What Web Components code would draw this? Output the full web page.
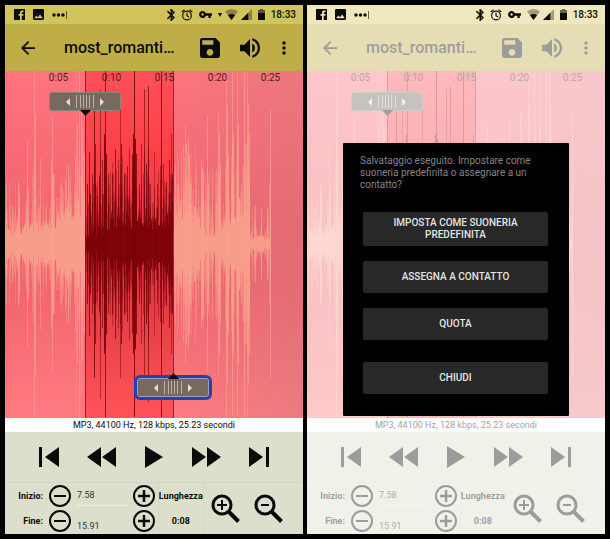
<!DOCTYPE html>
<html lang="it">
<head>
<meta charset="utf-8">
<meta name="viewport" content="width=device-width, initial-scale=1">
<title>Ringtone editor</title>
<style>
  html { height: 100%; }
  body {
    margin: 0; min-height: 100%; box-sizing: border-box; padding: 5px;
    display: grid; grid-template-columns: 1fr 1fr; gap: 4px;
    background: #000; color: #0b0b0b;
    font: 10px/12px Roboto, "Noto Sans", sans-serif;
  }
</style>
</head>
<body>
<phone-screen>
  <status-bar slot="status" roaming></status-bar>
  <app-toolbar heading="most_romanti…"></app-toolbar>
  <wave-view></wave-view>
  <info-line>MP3, 44100 Hz, 128 kbps, 25.23 secondi</info-line>
  <transport-bar></transport-bar>
  <range-panel start="7.58" end="15.91" length="0:08"></range-panel>
</phone-screen>
<phone-screen dimmed>
  <status-bar slot="status"></status-bar>
  <app-toolbar heading="most_romanti…"></app-toolbar>
  <wave-view></wave-view>
  <info-line>MP3, 44100 Hz, 128 kbps, 25.23 secondi</info-line>
  <transport-bar></transport-bar>
  <range-panel start="7.58" end="15.91" length="0:08"></range-panel>
  <choice-dialog slot="dialog">
    <span slot="message">Salvataggio eseguito. Impostare come suoneria predefinita o assegnare a un contatto?</span>
    <dialog-option>IMPOSTA COME SUONERIA PREDEFINITA</dialog-option>
    <dialog-option>ASSEGNA A CONTATTO</dialog-option>
    <dialog-option>QUOTA</dialog-option>
    <dialog-option last>CHIUDI</dialog-option>
  </choice-dialog>
</phone-screen>

<script>
const BUTTON_RESET = `
  button { all: unset; box-sizing: border-box; display: flex; align-items: center; justify-content: center; cursor: pointer; }
`;

// name: [viewBox, width, height, markup]
const ICONS = {
  facebook: ['0 0 22 22', 11, 11, '<path fill-rule="evenodd" d="M1 0H21Q22 0 22 1V21Q22 22 21 22H15.500V13.500H18.500L19 10H15.500V8Q15.500 6.500 17 6.500H19V3H16Q12 3 12 7.500V10H9V13.500H12V22H1Q0 22 0 21V1Q0 0 1 0Z"/>'],
  picture: ['3 3 18 18', 11, 11, '<path d="M21 19V5c0-1.100-.9-2-2-2H5c-1.100 0-2 .9-2 2v14c0 1.100.9 2 2 2h14c1.100 0 2-.9 2-2zM8.500 13.500l2.500 3.010L14.500 12l4.500 6H5l3.500-4.500z"/>'],
  more: ['0 0 15 8', 15, 8, '<circle cx="2" cy="4" r="1.700"/><circle cx="6.500" cy="4" r="1.700"/><circle cx="11" cy="4" r="1.700"/><path opacity=".6" d="M14 0h1v8h-1z"/>'],
  bluetooth: ['5 2 13 20', 8, 12, '<path stroke="currentColor" stroke-width=".7" d="M17.710 7.710L12 2h-1v7.590L6.410 5 5 6.410 10.590 12 5 17.590 6.410 19 11 14.410V22h1l5.710-5.710-4.300-4.290 4.300-4.290zM13 5.830l1.880 1.880L13 9.590V5.830zm1.880 10.460L13 18.170v-3.760l1.880 1.880z"/>'],
  alarm: ['0 0 24 24', 12, 12, '<g fill="none" stroke="currentColor" stroke-width="2.200"><circle cx="12" cy="13" r="8.800"/><path d="M12 7.500V13.500L16 16M1.500 6L7 1.500M22.500 6L17 1.500"/></g>'],
  key: ['1 6 22 12', 13, 7, '<path d="M12.650 10C11.830 7.670 9.610 6 7 6c-3.310 0-6 2.690-6 6s2.690 6 6 6c2.610 0 4.830-1.670 5.650-4H17v4h4v-4h2v-4H12.650zM7 14c-1.100 0-2-.9-2-2s.9-2 2-2 2 .9 2 2-.9 2-2 2z"/>'],
  down: ['0 0 4 4', 4, 4, '<path d="M0 0h4L2 4z"/>'],
  wifi: ['0 0 26 22', 13, 11, '<path opacity=".35" d="M13 22L0 5Q13-5 26 5Z"/><path d="M13 22L6 12.500Q13 7 20 12.500Z"/>'],
  signal: ['0 0 22 22', 11, 11, '<path opacity=".35" d="M22 0V22H0Z"/><path d="M14.500 7.500V22H0Z"/>'],
  battery: ['0 0 14 22', 7, 11, '<path opacity=".6" d="M4 0h6v2h4v7H0V2h4z"/><path d="M0 8h14v14H0z"/>'],
  back: ['4 4 16 16', 14, 14, '<path d="M20 11H7.830l5.590-5.590L12 4l-8 8 8 8 1.410-1.410L7.830 13H20v-2z"/>'],
  save: ['3 3 18 18', 20, 20, '<path d="M17 3H5c-1.110 0-2 .9-2 2v14c0 1.100.89 2 2 2h14c1.100 0 2-.9 2-2V7l-4-4zm-5 16c-1.660 0-3-1.340-3-3s1.340-3 3-3 3 1.340 3 3-1.340 3-3 3zm3-10H5V5h10v4z"/>'],
  volume: ['3 3 18 18', 20, 20, '<path d="M3 9v6h4l5 5V4L7 9H3zm13.500 3c0-1.770-1.020-3.290-2.500-4.030v8.050c1.480-.73 2.500-2.250 2.500-4.020zM14 3.230v2.060c2.890.86 5 3.540 5 6.710s-2.110 5.850-5 6.710v2.060c4.010-.91 7-4.490 7-8.770s-2.990-7.860-7-8.770z"/>'],
  menu: ['0 0 8 14', 8, 14, '<circle cx="4" cy="2" r="1.700"/><circle cx="4" cy="7" r="1.700"/><circle cx="4" cy="12" r="1.700"/>'],
  first: ['0 0 20 20', 20, 20, '<path d="M0 0h3v20H0zM20 0V20L6 10Z"/>'],
  rewind: ['0 0 29 20', 29, 20, '<path d="M14 0V20L0 10ZM29 0V20L15 10Z"/>'],
  play: ['0 0 18 22', 18, 22, '<path d="M0 0L18 11L0 22Z"/>'],
  forward: ['0 0 29 20', 29, 20, '<path d="M0 0L14 10L0 20ZM15 0L29 10L15 20Z"/>'],
  last: ['0 0 20 20', 20, 20, '<path d="M17 0h3v20h-3zM0 0V20L14 10Z"/>'],
  minus: ['0 0 22 22', 22, 22, '<g fill="none" stroke="currentColor" stroke-width="2"><circle cx="11" cy="11" r="10"/><path d="M5 11h12"/></g>'],
  plus: ['0 0 22 22', 22, 22, '<g fill="none" stroke="currentColor" stroke-width="2"><circle cx="11" cy="11" r="10"/><path stroke-width="2.500" d="M5 11h12M11 5v12"/></g>'],
  zoomin: ['0 0 29 29', 29, 29, '<g fill="none" stroke="currentColor" stroke-width="3"><circle cx="11" cy="11" r="9"/><path stroke-width="2" d="M6 11h10M11 6v10"/><path stroke-width="4" d="M17 17L27.500 27.500"/></g>'],
  zoomout: ['0 0 29 29', 29, 29, '<g fill="none" stroke="currentColor" stroke-width="3"><circle cx="11" cy="11" r="9"/><path stroke-width="2" d="M7 11h8"/><path stroke-width="4" d="M17 17L27.500 27.500"/></g>']
};

class Base extends HTMLElement {
  connectedCallback() {
    if (this.shadowRoot) return;
    this.attachShadow({ mode: 'open' }).innerHTML = this.view();
  }
}

customElements.define('ui-icon', class extends Base {
  view() {
    const [box, w, h, body] = ICONS[this.getAttribute('name')];
    return `<style>:host{display:block;flex:none} svg{display:block;fill:currentColor}</style>
      <svg viewBox="${box}" width="${w}" height="${h}" aria-hidden="true">${body}</svg>`;
  }
});

customElements.define('phone-screen', class extends Base {
  view() {
    return `<style>
      :host { display: flex; flex-direction: column; min-width: 0; background: #fff; }
      .area { flex: 1; display: grid; }
      .content { grid-area: 1 / 1; display: flex; flex-direction: column; min-width: 0; }
      :host([dimmed]) .content { opacity: .4; }
      .over { grid-area: 1 / 1; display: flex; align-items: center; padding: 0 36px; z-index: 1; pointer-events: none; }
      ::slotted(wave-view) { flex: 1; }
      ::slotted(choice-dialog) { flex: 1; pointer-events: auto; }
      .status { background: #d2c45c; }
      :host([dimmed]) .status { background: #efe8bf; }
    </style>
    <div class="status"><slot name="status"></slot></div>
    <div class="area"><div class="content"><slot></slot></div><div class="over"><slot name="dialog"></slot></div></div>`;
  }
});

customElements.define('status-bar', class extends Base {
  view() {
    const i = n => `<ui-icon name="${n}"></ui-icon>`;
    return `<style>
      :host { display: flex; align-items: center; justify-content: space-between; height: 19px; padding: 0 7px 0 9px; }
      div { display: flex; align-items: center; }
      .left { gap: 8px; } .right { gap: 6px; } .net { gap: 3px; }
      time { font-weight: 500; }
    </style>
    <div class="left">${i('facebook')}${i('picture')}${i('more')}</div>
    <div class="right">${i('bluetooth')}${i('alarm')}${i('key')}
      <div class="net">${this.hasAttribute('roaming') ? i('down') : ''}${i('wifi')}${i('signal')}</div>
      ${i('battery')}<time>18:33</time></div>`;
  }
});

customElements.define('app-toolbar', class extends Base {
  view() {
    return `<style>${BUTTON_RESET}
      :host { display: flex; align-items: center; height: 47px; padding: 0 15px 0 16px; background: #bfae48; }
      h1 { flex: 1; margin: 0 0 0 29px; font-size: 16px; line-height: 20px; font-weight: 500; white-space: nowrap; }
      nav { display: flex; align-items: center; gap: 20px; }
    </style>
    <button aria-label="Indietro"><ui-icon name="back"></ui-icon></button>
    <h1>${this.getAttribute('heading')}</h1>
    <nav>
      <button aria-label="Salva"><ui-icon name="save"></ui-icon></button>
      <button aria-label="Volume"><ui-icon name="volume"></ui-icon></button>
      <button aria-label="Menu"><ui-icon name="menu"></ui-icon></button>
    </nav>`;
  }
});

customElements.define('drag-marker', class extends Base {
  view() {
    return `<style>${BUTTON_RESET}
      :host { display: block; }
      button { position: relative; width: 72px; height: 19px; gap: 6px; border-radius: 3px;
        background: #77695f; border: 1px solid #8d857c; color: #e6e0d8; }
      :host([active]) button { outline: 3px solid #263fb4; border-color: #98a0b8; }
      .tip { position: absolute; left: 50%; margin-left: -5px; top: 100%; color: #170808; }
      :host([active]) .tip { top: auto; bottom: 100%; }
      svg { display: block; fill: currentColor; }
      .grip { opacity: .6; }
    </style>
    <button aria-label="${this.getAttribute('label')}">
      <svg width="4" height="8"><path d="M4 0V8L0 4Z"/></svg>
      <svg class="grip" width="18" height="13"><path d="M0 0h1v13H0zM4 0h1v13H4zM7 0h1v13H7zM10 0h1v13h-1zM13 0h1v13h-1zM17 0h1v13h-1z"/></svg>
      <svg width="4" height="8"><path d="M0 0V8L4 4Z"/></svg>
      <svg class="tip" width="11" height="6"><path d="${this.hasAttribute('active') ? 'M0 6H11L5.500 0Z' : 'M0 0H11L5.500 6Z'}"/></svg>
    </button>`;
  }
});

// Each spike: [x, half height, strength] around the middle line.
const BEFORE = [[1,60,.6],[7,38,.7],[13,62,.8],[14,50,.8],[22,104,.6],[23,55,.7],[29,173,.6],[30,130,.6],[35,86,.5],[47,128,.6],[46,84,.7],[48,70,.8],[56,60,.6],[60,66,.6],[63,78,.6],[70,88,.6],[72,120,.6],[71,173,.3],[74,173,.6],[76,150,.7],[77,118,.7],[79,90,.6]];
const SELECTED = [[82,60,.7],[84,92,.7],[85,50,.8],[87,70,.6],[89,134,.8],[90,100,.7],[92,48,.7],[94,68,.7],[95,155,.5],[97,84,.6],[100,173,.7],[99,110,.9],[101,90,.9],[103,70,.6],[107,70,.7],[110,95,.7],[113,84,.5],[115,134,.5],[116,100,.8],[119,70,.8],[122,78,.7],[124,96,.5],[127,90,.7],[128,110,.9],[129,173,.9],[130,105,.9],[131,90,.8],[134,60,.6],[136,100,.5],[139,155,.6],[141,80,.8],[143,158,.7],[145,60,.6],[149,92,.4],[152,60,.6],[156,173,.8],[158,80,.6],[161,62,.8],[164,84,.7],[166,110,.5],[167,70,.8]];
const AFTER = [[170,80,.5],[173,62,.6],[176,92,.5],[178,98,.6],[180,120,.6],[181,100,.7],[183,106,.7],[184,90,.8],[185,60,.8],[196,84,.6],[197,76,.8],[198,70,.8],[202,128,.7],[203,60,.7],[207,68,.6],[211,76,.5],[213,130,.6],[214,110,.7],[215,80,.7],[221,173,.6],[222,140,.7],[223,90,.8],[227,171,.7],[228,110,.7],[232,172,.6],[233,120,.7],[236,60,.6],[239,173,.8],[240,100,.7],[242,172,.6],[243,140,.7],[244,110,.7],[250,38,.6],[256,35,.6],[262,36,.6],[265,134,.7]];

const MIDDLE = 173;
const column = (x, h, o) => `<path opacity="${o}" d="M${x} ${MIDDLE - h}h1v${2 * h}h-1z"/>`;
const noise = x => { const v = Math.sin(x * 127.1 + 3.7) * 43758.5453; return v - Math.floor(v); };

function spikes(list) {
  return list.map(([x, h, o]) => column(x, h, o) + column(x, Math.round(h * .6), o) + column(x - 1, Math.round(h * .45), o * .6)).join('');
}
function core(from, to, solid, reach) {
  let out = '';
  for (let x = from; x < to; x++) {
    const t = (x - from) / (to - from), n = noise(x);
    const s = Math.round(solid(t) * (.6 + .6 * n));
    const r = Math.round(s + reach(t) * Math.pow(noise(x + 500), 1.5));
    out += column(x, s, .85) + column(x, r, .35) + column(x, Math.round((s + r) / 2), .35);
  }
  return out;
}

customElements.define('wave-view', class extends Base {
  view() {
    return `<style>
      :host { display: block; position: relative; min-height: 200px; background: #f0707a; }
      .wave { position: absolute; inset: 0; width: 100%; height: 100%; display: block; }
      .times { position: relative; display: grid; grid-template-columns: repeat(5, 1fr); padding: 1px 6px 0 27px; text-align: center; color: #571820; }
      drag-marker { position: absolute; transform: translateX(-50%); }
      .start { left: 27%; top: 21px; }
      .end { left: 56.500%; bottom: 21px; }
    </style>
    <svg class="wave" viewBox="0 0 298 347" preserveAspectRatio="none" aria-hidden="true">
      <defs>
        <linearGradient id="bg" x1="0" y1="0" x2="0" y2="1"><stop offset="0" stop-color="#ff747d"/><stop offset=".45" stop-color="#f2636e"/><stop offset=".65" stop-color="#f3666f"/><stop offset="1" stop-color="#ff7b80"/></linearGradient>
        <linearGradient id="shade" x1="0" y1="0" x2="1" y2="0"><stop offset=".5" stop-color="#c87c82" stop-opacity="0"/><stop offset="1" stop-color="#c87c82" stop-opacity=".35"/></linearGradient>
        <linearGradient id="sel" x1="0" y1="0" x2="0" y2="1"><stop offset="0" stop-color="#ff5058"/><stop offset=".25" stop-color="#fb3f47"/><stop offset=".6" stop-color="#dd3640"/><stop offset="1" stop-color="#ff5459"/></linearGradient>
      </defs>
      <path fill="url(#bg)" d="M0 0H298V347H0Z"/>
      <path fill="url(#shade)" d="M0 0H298V347H0Z"/>
      <path fill="url(#sel)" d="M80 0H168V347H80Z"/>
      <g fill="#f8a08c" shape-rendering="crispEdges">${core(0, 80, t => 14 + 30 * t * t, () => 50)}${spikes(BEFORE)}${core(168, 245, t => 24 + 14 * Math.sin(t * 9), () => 70)}${core(245, 266, () => 7, () => 34)}${spikes(AFTER)}</g>
      <g fill="#7b0208" shape-rendering="crispEdges">${core(80, 168, t => 8 + 18 * Math.sin(t * 3.1) + 24 * Math.pow(t, 8), t => 36 + 34 * Math.sin(t * 3.1))}${spikes(SELECTED)}</g>
      <path fill="#5a2024" opacity=".8" d="M80 0h1V347h-1zM168 0h1V347h-1z"/>
    </svg>
    <div class="times"><span>0:05</span><span>0:10</span><span>0:15</span><span>0:20</span><span>0:25</span></div>
    <drag-marker class="start" label="Inizio selezione"></drag-marker>
    <drag-marker class="end" label="Fine selezione" active></drag-marker>`;
  }
});

customElements.define('info-line', class extends Base {
  view() {
    return `<style>:host { display: block; background: #fff; font-size: 9px; line-height: 14px; text-align: center; white-space: nowrap; }</style><slot></slot>`;
  }
});

customElements.define('transport-bar', class extends Base {
  view() {
    const b = (n, l) => `<button aria-label="${l}"><ui-icon name="${n}"></ui-icon></button>`;
    return `<style>${BUTTON_RESET}
      :host { display: grid; grid-template-columns: repeat(5, 1fr); height: 50px; padding: 0 18px; background: #dcdfcc; }
    </style>${b('first', 'Inizio')}${b('rewind', 'Riavvolgi')}${b('play', 'Riproduci')}${b('forward', 'Avanti')}${b('last', 'Fine')}`;
  }
});

customElements.define('range-panel', class extends Base {
  view() {
    const row = (id, label, value) => `
      <label for="${id}">${label}</label>
      <button aria-label="${label} meno"><ui-icon name="minus"></ui-icon></button>
      <input id="${id}" class="${id}" inputmode="decimal" value="${value}">
      <button aria-label="${label} più"><ui-icon name="plus"></ui-icon></button>`;
    return `<style>${BUTTON_RESET}
      :host { display: grid; grid-template-columns: 154fr 44fr 100fr; height: 51px; border-top: 1px solid #d3d6c3; background: #dcdfcc; font-size: 9px; }
      .edit { display: grid; grid-template-columns: 38px 22px 1fr 22px; grid-template-rows: 1fr 1fr; column-gap: 6px; padding-right: 3px; align-items: center; }
      label { font-weight: 700; text-align: right; }
      input { all: unset; box-sizing: border-box; width: 100%; min-width: 0; height: 20px; font-size: 9px; line-height: 18px; color: #333; border-bottom: 1px solid #eef0e4; }
      .end { align-self: end; height: 16px; line-height: 16px; border: 0; }
      .length { display: grid; grid-template-rows: 1fr 1fr; place-items: center; font-weight: 700; border: solid #d3d6c3; border-width: 0 1px; }
      .zoom { display: flex; align-items: center; justify-content: center; gap: 14px; padding-right: 12px; }
    </style>
    <div class="edit">${row('start', 'Inizio:', this.getAttribute('start'))}${row('end', 'Fine:', this.getAttribute('end'))}</div>
    <div class="length"><span>Lunghezza</span><span>${this.getAttribute('length')}</span></div>
    <div class="zoom"><button aria-label="Ingrandisci"><ui-icon name="zoomin"></ui-icon></button><button aria-label="Riduci"><ui-icon name="zoomout"></ui-icon></button></div>`;
  }
});

customElements.define('choice-dialog', class extends Base {
  view() {
    return `<style>
      :host { display: block; background: #000; border-radius: 1px; padding: 12px 21px 22px 20px; }
      p { margin: 0 -3px 21px; color: #858585; }
      .options { display: flex; flex-direction: column; gap: 15px; }
      ::slotted([last]) { margin-top: 7px; }
    </style>
    <div role="dialog"><p><slot name="message"></slot></p><div class="options"><slot></slot></div></div>`;
  }
});

customElements.define('dialog-option', class extends Base {
  view() {
    return `<style>${BUTTON_RESET}
      :host { display: block; }
      button { width: 100%; min-height: 32px; padding: 5px 24px; border-radius: 2px; background: #292829; color: #e4e4e4; font-weight: 500; text-align: center; }
    </style><button><slot></slot></button>`;
  }
});
</script>
</body>
</html>
